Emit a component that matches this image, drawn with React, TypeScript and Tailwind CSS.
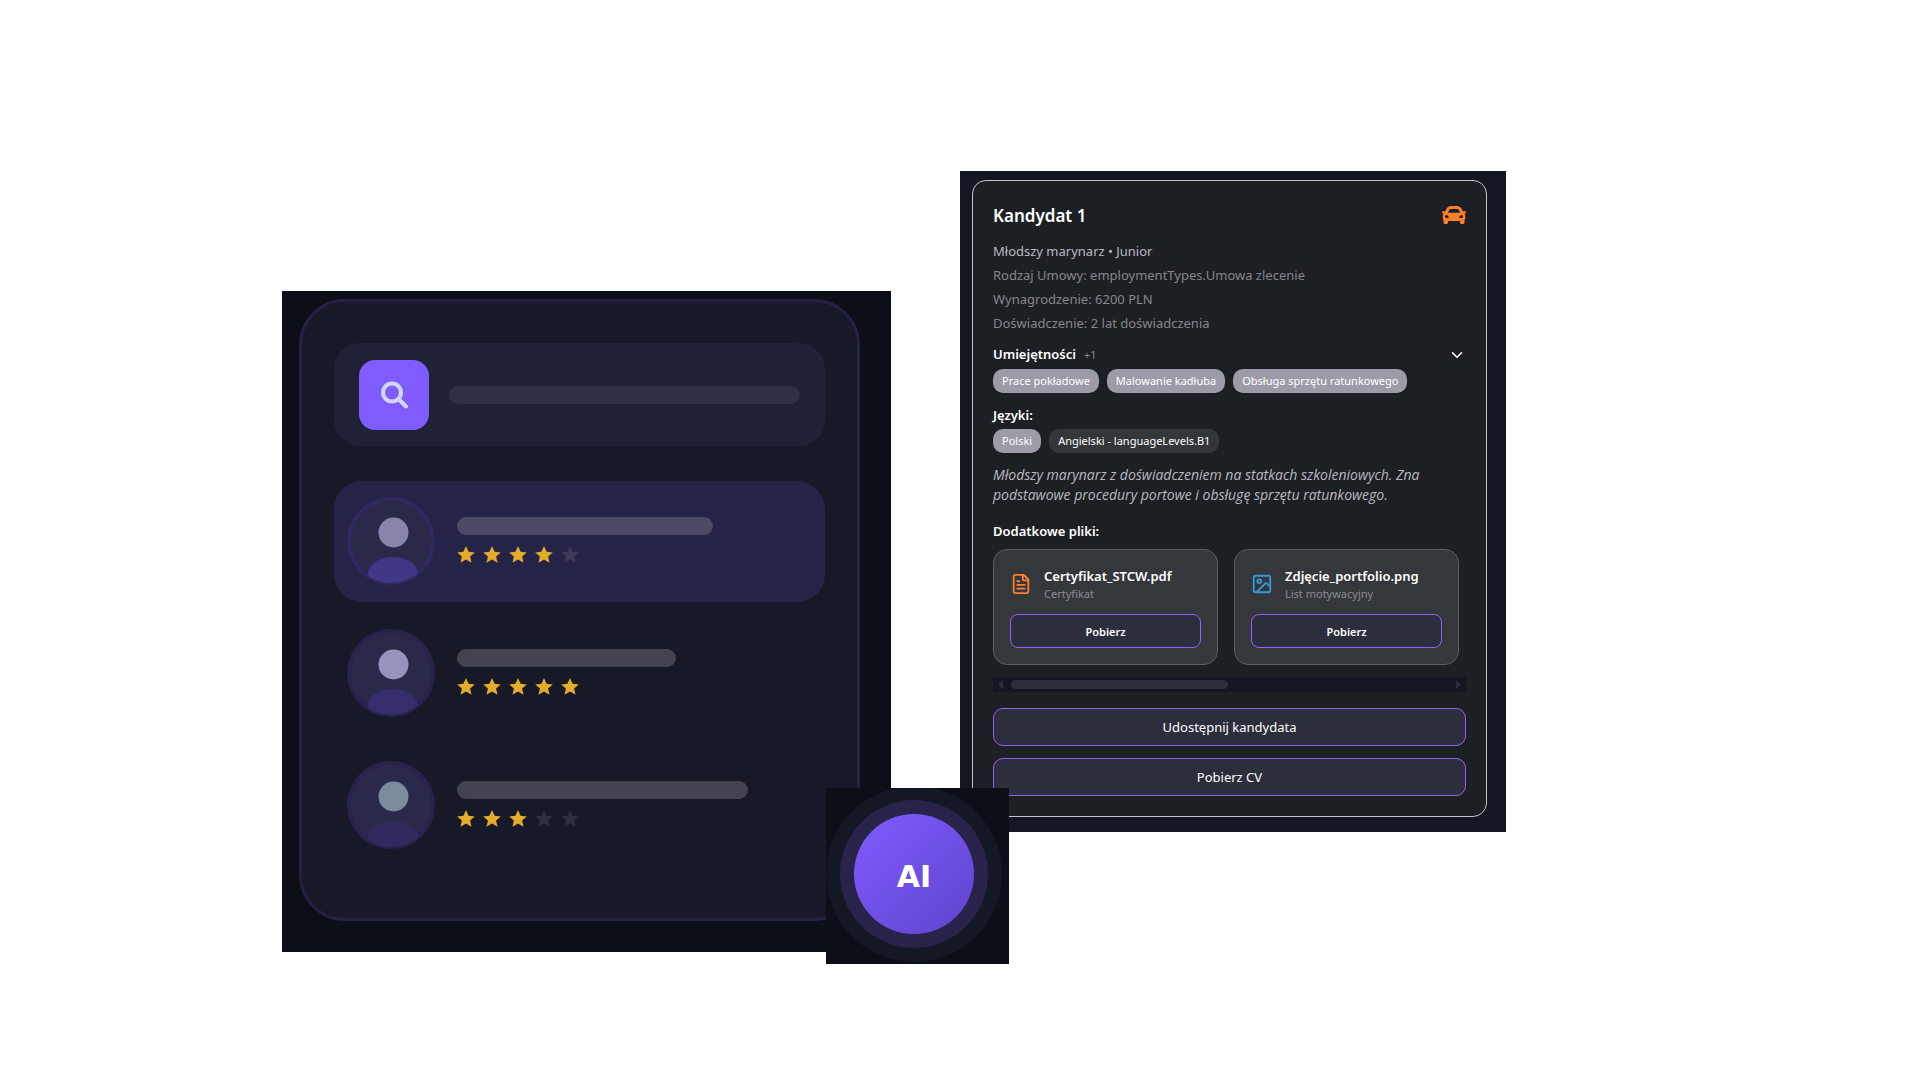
import { useState } from 'react'
import { ChevronDown, FileText, Image as ImageIcon } from 'lucide-react'
import { FaCar } from 'react-icons/fa'

type PreviewRow = {
  id: number
  rating: number
  bar: string
  head: string
  body: string
  ring: string
  active?: boolean
}

type FileItem = {
  name: string
  kind: string
  type: 'document' | 'image'
}

const rows: PreviewRow[] = [
  { id: 1, rating: 4, bar: 'w-64 bg-[#4d4a68]', head: 'fill-[#8a84ad]', body: 'fill-[#413787]', ring: 'stroke-[#30285f]', active: true },
  { id: 2, rating: 5, bar: 'w-[219px] bg-[#42434f]', head: 'fill-[#9693bd]', body: 'fill-[#372d6c]', ring: 'stroke-[#28234d]' },
  { id: 3, rating: 3, bar: 'w-[291px] bg-[#42434f]', head: 'fill-[#7b8b9e]', body: 'fill-[#32295f]', ring: 'stroke-[#28234d]' },
]

const skills = ['Prace pokładowe', 'Malowanie kadłuba', 'Obsługa sprzętu ratunkowego']

const files: FileItem[] = [
  { name: 'Certyfikat_STCW.pdf', kind: 'Certyfikat', type: 'document' },
  { name: 'Zdjęcie_portfolio.png', kind: 'List motywacyjny', type: 'image' },
]

function Avatar({ row }: { row: PreviewRow }) {
  return (
    <svg viewBox="0 0 88 88" className="size-[88px] shrink-0">
      <clipPath id={`avatar-${row.id}`}>
        <circle cx="44" cy="44" r="42" />
      </clipPath>
      <circle cx="44" cy="44" r="42" strokeWidth="4" className={`fill-[#2b2949] ${row.ring}`} />
      <circle cx="46.5" cy="35.5" r="15" className={row.head} />
      <ellipse cx="46" cy="76" rx="25" ry="16" className={row.body} clipPath={`url(#avatar-${row.id})`} />
    </svg>
  )
}

function Star({ className }: { className: string }) {
  return (
    <svg viewBox="0 0 18 18" className={`size-[18px] ${className}`}>
      <path d="M9 0l2.600 5.800 6.200.600-4.700 4.200 1.400 6.200L9 13.600l-5.500 3.200 1.400-6.200L.200 6.400l6.200-.600z" />
    </svg>
  )
}

function SearchPreview() {
  return (
    <section className="h-[661px] w-[609px] shrink-0 bg-[#0c0f17] pt-2 pl-[17px]">
      <div className="h-[622px] w-[561px] rounded-[46px] border-[3px] border-[#242145] bg-[#171929] px-8 pt-[41px]">
        <div className="flex h-[103px] items-center gap-5 rounded-[26px] bg-[#202136] px-[25px]">
          <button aria-label="Szukaj" className="grid size-[70px] shrink-0 place-items-center rounded-2xl bg-[#7f5cff]">
            <svg viewBox="0 0 28 28" className="size-7 fill-none stroke-[#d3d6ff]">
              <circle cx="12" cy="11.500" r="9" strokeWidth="4" />
              <path d="M19 18.500l7 7" strokeWidth="4" strokeLinecap="round" />
            </svg>
          </button>
          <div className="h-[18px] flex-1 rounded-full bg-[#2f2f45]" />
        </div>
        <ul className="mt-[35px] space-y-[11px]">
          {rows.map((row) => (
            <li
              key={row.id}
              className={`flex h-[121px] items-center gap-[22px] rounded-[28px] px-[13px] pb-0.5 ${row.active ? 'bg-[#262348]' : ''}`}
            >
              <Avatar row={row} />
              <div className="space-y-[11px]">
                <div className={`h-[18px] rounded-full ${row.bar}`} />
                <div className="flex gap-2">
                  {[1, 2, 3, 4, 5].map((n) => (
                    <Star
                      key={n}
                      className={n <= row.rating ? 'fill-[#e3ac2b]' : row.active ? 'fill-[#3c3959]' : 'fill-[#2d2f3d]'}
                    />
                  ))}
                </div>
              </div>
            </li>
          ))}
        </ul>
      </div>
    </section>
  )
}

function Chip({ label, dark }: { label: string; dark?: boolean }) {
  return (
    <li className={`h-6 rounded-[10px] px-[9px] text-[11px] leading-6 text-white ${dark ? 'bg-[#33363b]' : 'bg-[#9d9ba8]'}`}>
      {label}
    </li>
  )
}

function FileCard({ file }: { file: FileItem }) {
  return (
    <li className="w-[225px] shrink-0 rounded-[14px] border border-[#5b5e66] bg-[#34373b] p-4">
      <div className="flex h-9 items-center gap-3">
        {file.type === 'document' ? (
          <FileText className="size-[22px] shrink-0 text-[#ff7f2a]" />
        ) : (
          <ImageIcon className="size-[22px] shrink-0 text-[#3498db]" />
        )}
        <div>
          <p className="text-[13px] leading-5 font-semibold text-white">{file.name}</p>
          <p className="text-[11px] leading-4 text-[#8c8c94]">{file.kind}</p>
        </div>
      </div>
      <button className="mt-3 h-[34px] w-full rounded-lg border border-[#9b5cff] bg-[#2c2e3b] pt-0.5 text-[11px] font-semibold text-white">
        Pobierz
      </button>
    </li>
  )
}

function CandidateCard() {
  const [open, setOpen] = useState(false)

  return (
    <section className="w-[546px] shrink-0 bg-[#141722] pt-[9px] pr-[19px] pb-[15px] pl-3">
      <article className="rounded-[14px] border border-[#c3c4cc] bg-[#1c1f23] p-5">
        <header className="flex h-7 items-center justify-between">
          <h2 className="pt-0.5 text-[17px] font-semibold text-white">Kandydat 1</h2>
          <FaCar className="size-6 text-[#ff7f2a]" />
        </header>

        <div className="mt-3 space-y-1 text-[13px] leading-5 text-[#86868d]">
          <p className="text-[#b9b9c0]">Młodszy marynarz • Junior</p>
          <p>Rodzaj Umowy: employmentTypes.Umowa zlecenie</p>
          <p>Wynagrodzenie: 6200 PLN</p>
          <p>Doświadczenie: 2 lat doświadczenia</p>
        </div>

        <div className="mt-3 flex h-5 items-center gap-2 text-[13px]">
          <h3 className="font-semibold text-white">Umiejętności</h3>
          <span className="text-[11px] text-[#86868d]">+1</span>
          <button aria-label="Rozwiń umiejętności" onClick={() => setOpen(!open)} className="ml-auto">
            <ChevronDown className={`size-[18px] text-white ${open ? 'rotate-180' : ''}`} />
          </button>
        </div>
        <ul className="mt-1 flex gap-2">
          {skills.map((skill) => (
            <Chip key={skill} label={skill} />
          ))}
        </ul>

        <h3 className="mt-3 text-[13px] leading-5 font-semibold text-white">Języki:</h3>
        <ul className="mt-1 flex gap-2">
          <Chip label="Polski" />
          <Chip label="Angielski - languageLevels.B1" dark />
        </ul>

        <p className="mt-3 pr-5 font-['Open_Sans',sans-serif] text-[14px] leading-5 text-[#b9b9c0] italic">
          Młodszy marynarz z doświadczeniem na statkach szkoleniowych. Zna podstawowe procedury portowe i obsługę
          sprzętu ratunkowego.
        </p>

        <h3 className="mt-4 text-[13px] leading-5 font-semibold text-white">Dodatkowe pliki:</h3>
        <ul className="mt-2 flex gap-4 overflow-hidden">
          {files.map((file) => (
            <FileCard key={file.name} file={file} />
          ))}
        </ul>

        <div className="mt-3 flex h-[15px] items-center justify-between bg-[#141722] px-[5px]">
          <div className="flex items-center gap-2">
            <svg viewBox="0 0 5 9" className="h-[9px] w-[5px] fill-[#2c2e3b]">
              <path d="M5 0v9L0 4.5z" />
            </svg>
            <div className="h-[9px] w-[217px] rounded-full bg-[#2c2e3b]" />
          </div>
          <svg viewBox="0 0 5 9" className="h-[9px] w-[5px] fill-[#2c2e3b]">
            <path d="M0 0v9l5-4.5z" />
          </svg>
        </div>

        <div className="mt-4 grid gap-3">
          <button className="h-[38px] rounded-[10px] border border-[#9b5cff] bg-[#2c2e3b] pt-0.5 text-[13px] text-white">
            Udostępnij kandydata
          </button>
          <button className="h-[38px] rounded-[10px] border border-[#9b5cff] bg-[#2c2e3b] pt-0.5 text-[13px] text-white">
            Pobierz CV
          </button>
        </div>
      </article>
    </section>
  )
}

function AiBadge() {
  return (
    <div className="absolute top-[617px] left-[544px] flex h-44 w-[183px] items-end overflow-hidden bg-[#0c0f17] pb-0.5">
      <div className="grid size-[176px] shrink-0 place-items-center rounded-full bg-[#141724]">
        <div className="grid size-[148px] place-items-center rounded-full bg-[#29234c]">
          <div className="grid size-[120px] place-items-center rounded-full bg-linear-to-br from-[#7f5cff] to-[#5f44cc] pt-1 font-['DejaVu_Sans',sans-serif] text-[30px] font-bold text-white">
            AI
          </div>
        </div>
      </div>
    </div>
  )
}

export default function App() {
  return (
    <main className="flex min-h-screen justify-center bg-white pt-[171px] pr-[132px] font-['Noto_Sans','Open_Sans',sans-serif]">
      <div className="relative flex items-start gap-[69px]">
        <div className="mt-[120px]">
          <SearchPreview />
        </div>
        <CandidateCard />
        <AiBadge />
      </div>
    </main>
  )
}
